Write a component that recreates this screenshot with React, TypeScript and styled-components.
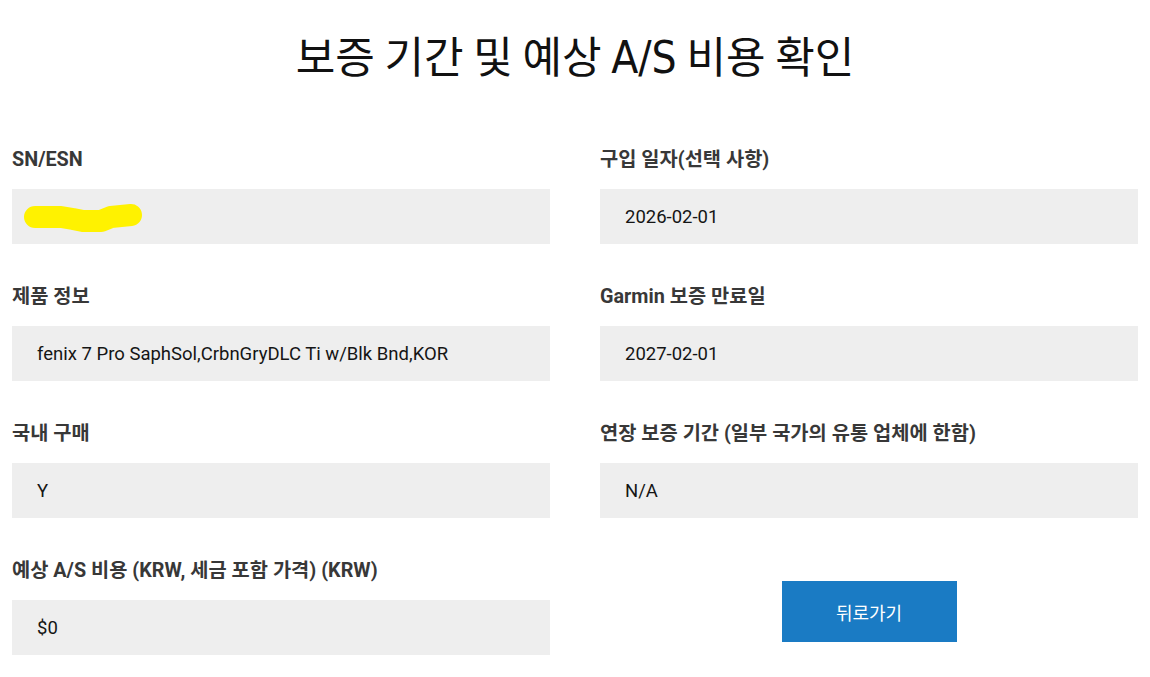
import React from "react";
import styled, { createGlobalStyle } from "styled-components";

const Global = createGlobalStyle`
  html, body { margin: 0; padding: 0; background: #fff; }
  body { font-family: Roboto, "Noto Sans CJK KR", sans-serif; }
`;

const Page = styled.div`
  padding: 29px 12px 0;
`;

const Title = styled.h1`
  margin: 0;
  height: 50px;
  text-align: center;
  font-family: "Noto Sans CJK KR", sans-serif;
  font-weight: 400;
  font-size: 43px;
  line-height: 50px;
  color: #111;
`;

const Condensed = styled.span`
  font-family: "DejaVu Sans Condensed", "Liberation Sans Narrow", "Noto Sans CJK KR", sans-serif;
  font-weight: 400;
  font-size: 44px;
`;

const Grid = styled.div`
  display: grid;
  grid-template-columns: 1fr 1fr;
  column-gap: 50px;
  row-gap: 41px;
  margin-top: 69px;
`;

const Field = styled.div`
  display: flex;
  flex-direction: column;
`;

const Label = styled.div`
  height: 24px;
  font-family: Roboto, "Noto Sans CJK KR", sans-serif;
  font-weight: 700;
  font-size: 19.8px;
  line-height: 24px;
  color: #383838;
  margin-bottom: 17px;
  white-space: nowrap;
`;

const Value = styled.div`
  height: 55px;
  box-sizing: border-box;
  background: #eeeeee;
  padding: 0 25px;
  display: flex;
  align-items: center;
  font-family: Roboto, "Noto Sans CJK KR", sans-serif;
  font-size: 18.5px;
  color: #151515;
`;

const Scribble = styled.svg`
  margin-left: -22px;
  display: block;
`;

const ButtonCell = styled.div`
  display: flex;
  justify-content: center;
  padding-top: 22px;
`;

const BackButton = styled.button`
  width: 175px;
  height: 61px;
  border: none;
  background: #1a7bc4;
  color: #fff;
  font-family: "Noto Sans CJK KR", sans-serif;
  font-size: 18px;
  cursor: pointer;
`;

export default function App() {
  return (
    <>
      <Global />
      <Page>
        <Title>
          보증 기간 및 예상 <Condensed>A/S</Condensed> 비용 확인
        </Title>
        <Grid>
          <Field>
            <Label>SN/ESN</Label>
            <Value>
              <Scribble width="130" height="34" viewBox="0 0 130 34">
                <path
                  d="M20 17 L46 17 L58 19 L68 21 L86 21 L96 17 L116 15"
                  stroke="#fff200"
                  strokeWidth="22"
                  strokeLinecap="round"
                  strokeLinejoin="round"
                  fill="none"
                />
              </Scribble>
            </Value>
          </Field>
          <Field>
            <Label>구입 일자(선택 사항)</Label>
            <Value>2026-02-01</Value>
          </Field>
          <Field>
            <Label>제품 정보</Label>
            <Value>fenix 7 Pro SaphSol,CrbnGryDLC Ti w/Blk Bnd,KOR</Value>
          </Field>
          <Field>
            <Label>Garmin 보증 만료일</Label>
            <Value>2027-02-01</Value>
          </Field>
          <Field>
            <Label>국내 구매</Label>
            <Value>Y</Value>
          </Field>
          <Field>
            <Label>연장 보증 기간 (일부 국가의 유통 업체에 한함)</Label>
            <Value>N/A</Value>
          </Field>
          <Field>
            <Label>예상 A/S 비용 (KRW, 세금 포함 가격) (KRW)</Label>
            <Value>$0</Value>
          </Field>
          <ButtonCell>
            <BackButton>뒤로가기</BackButton>
          </ButtonCell>
        </Grid>
      </Page>
    </>
  );
}
